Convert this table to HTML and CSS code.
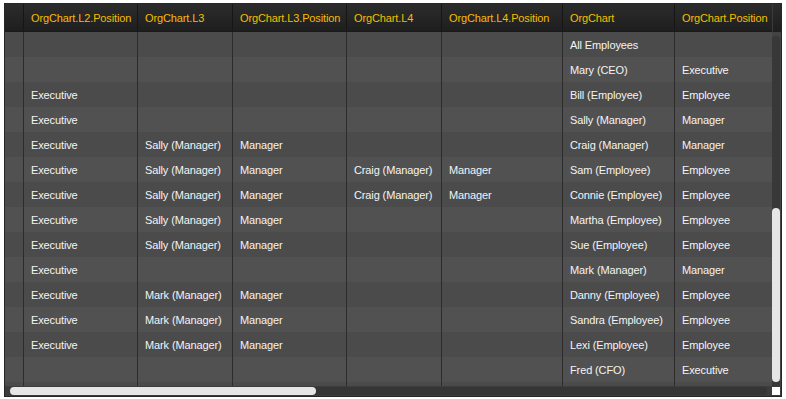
FILE: index.html
```html
<!DOCTYPE html>
<html>
<head>
<meta charset="utf-8">
<link rel="stylesheet" href="styles.css">
</head>
<body>
<div class="grid">
  <div class="main">
    <div class="viewport">
      <div class="row head">
        <div class="c"></div>
        <div class="c">OrgChart.L2.Position</div>
        <div class="c">OrgChart.L3</div>
        <div class="c">OrgChart.L3.Position</div>
        <div class="c">OrgChart.L4</div>
        <div class="c">OrgChart.L4.Position</div>
        <div class="c">OrgChart</div>
        <div class="c">OrgChart.Position</div>
      </div>
      <div class="row"><div class="c"></div><div class="c"></div><div class="c"></div><div class="c"></div><div class="c"></div><div class="c"></div><div class="c">All Employees</div><div class="c"></div></div>
      <div class="row"><div class="c"></div><div class="c"></div><div class="c"></div><div class="c"></div><div class="c"></div><div class="c"></div><div class="c">Mary (CEO)</div><div class="c">Executive</div></div>
      <div class="row"><div class="c"></div><div class="c">Executive</div><div class="c"></div><div class="c"></div><div class="c"></div><div class="c"></div><div class="c">Bill (Employee)</div><div class="c">Employee</div></div>
      <div class="row"><div class="c"></div><div class="c">Executive</div><div class="c"></div><div class="c"></div><div class="c"></div><div class="c"></div><div class="c">Sally (Manager)</div><div class="c">Manager</div></div>
      <div class="row"><div class="c"></div><div class="c">Executive</div><div class="c">Sally (Manager)</div><div class="c">Manager</div><div class="c"></div><div class="c"></div><div class="c">Craig (Manager)</div><div class="c">Manager</div></div>
      <div class="row"><div class="c"></div><div class="c">Executive</div><div class="c">Sally (Manager)</div><div class="c">Manager</div><div class="c">Craig (Manager)</div><div class="c">Manager</div><div class="c">Sam (Employee)</div><div class="c">Employee</div></div>
      <div class="row"><div class="c"></div><div class="c">Executive</div><div class="c">Sally (Manager)</div><div class="c">Manager</div><div class="c">Craig (Manager)</div><div class="c">Manager</div><div class="c">Connie (Employee)</div><div class="c">Employee</div></div>
      <div class="row"><div class="c"></div><div class="c">Executive</div><div class="c">Sally (Manager)</div><div class="c">Manager</div><div class="c"></div><div class="c"></div><div class="c">Martha (Employee)</div><div class="c">Employee</div></div>
      <div class="row"><div class="c"></div><div class="c">Executive</div><div class="c">Sally (Manager)</div><div class="c">Manager</div><div class="c"></div><div class="c"></div><div class="c">Sue (Employee)</div><div class="c">Employee</div></div>
      <div class="row"><div class="c"></div><div class="c">Executive</div><div class="c"></div><div class="c"></div><div class="c"></div><div class="c"></div><div class="c">Mark (Manager)</div><div class="c">Manager</div></div>
      <div class="row"><div class="c"></div><div class="c">Executive</div><div class="c">Mark (Manager)</div><div class="c">Manager</div><div class="c"></div><div class="c"></div><div class="c">Danny (Employee)</div><div class="c">Employee</div></div>
      <div class="row"><div class="c"></div><div class="c">Executive</div><div class="c">Mark (Manager)</div><div class="c">Manager</div><div class="c"></div><div class="c"></div><div class="c">Sandra (Employee)</div><div class="c">Employee</div></div>
      <div class="row"><div class="c"></div><div class="c">Executive</div><div class="c">Mark (Manager)</div><div class="c">Manager</div><div class="c"></div><div class="c"></div><div class="c">Lexi (Employee)</div><div class="c">Employee</div></div>
      <div class="row"><div class="c"></div><div class="c"></div><div class="c"></div><div class="c"></div><div class="c"></div><div class="c"></div><div class="c">Fred (CFO)</div><div class="c">Executive</div></div>
      <div class="row"><div class="c"></div><div class="c"></div><div class="c"></div><div class="c"></div><div class="c"></div><div class="c"></div><div class="c"></div><div class="c"></div></div>
    </div>
    <div class="vscroll">
      <div class="vhead"></div>
      <div class="vtrack"><div class="vthumb"></div></div>
    </div>
  </div>
  <div class="bottom">
    <div class="htrack-wrap"><div class="htrack"><div class="hthumb"></div></div></div>
    <div class="corner"></div>
  </div>
</div>
</body>
</html>
```
FILE: styles.css
```css
html, body {
  margin: 0;
  padding: 0;
  background: #ffffff;
}
body {
  padding: 3px 0 0 4px;
  font-family: "Liberation Sans", Arial, sans-serif;
  font-size: 11px;
}
.grid {
  width: 778px;
  height: 394px;
  box-sizing: border-box;
  border: 1px solid #262626;
  background: #3c3c3c;
  display: flex;
  flex-direction: column;
  overflow: hidden;
}
.main {
  display: flex;
  height: 382px;
}
.viewport {
  width: 767px;
  overflow: hidden;
}
.row {
  display: grid;
  grid-template-columns: 19px 114px 95px 114px 95px 121px 112px 120px;
  height: 25px;
  background: #4b4b4b;
  width: max-content;
}
.row:nth-child(odd) {
  background: #515151;
}
.row.head {
  height: 27px;
  background: linear-gradient(#2c2c2c, #1e1e1e);
  border-bottom: 1px solid #1a1a1a;
}
.c {
  box-sizing: border-box;
  border-right: 1px solid #2c2c2c;
  padding: 1px 0 0 7px;
  color: #f4f4f4;
  line-height: 25px;
  letter-spacing: -0.12px;
  white-space: nowrap;
  overflow: hidden;
}
.head .c {
  color: #f5bd00;
  line-height: 27px;
  border-right: 1px solid #161616;
}
.vscroll {
  width: 9px;
  display: flex;
  flex-direction: column;
  background: #434343;
}
.vhead {
  height: 28px;
  background: linear-gradient(#2c2c2c, #1e1e1e);
  border-left: 1px solid #3a3a3a;
  box-sizing: border-box;
}
.vtrack {
  flex: 1;
  margin-top: 4px;
  width: 8px;
  background: #383838;
  border-radius: 4px 4px 0 0;
  display: flex;
  flex-direction: column;
  justify-content: flex-end;
  padding-bottom: 4px;
}
.vthumb {
  height: 174px;
  background: #e6e6e6;
  border-radius: 4px;
}
.bottom {
  display: flex;
  height: 10px;
  background: #3c3c3c;
}
.htrack-wrap {
  width: 767px;
  padding: 1px 0 0 5px;
  box-sizing: border-box;
}
.htrack {
  width: 757px;
  height: 8px;
  background: #353535;
  border-radius: 4px;
}
.hthumb {
  width: 306px;
  height: 8px;
  background: #e6e6e6;
  border-radius: 4px;
}
.corner {
  width: 8px;
  height: 8px;
  margin-top: 1px;
  background: #ffffff;
}
```
